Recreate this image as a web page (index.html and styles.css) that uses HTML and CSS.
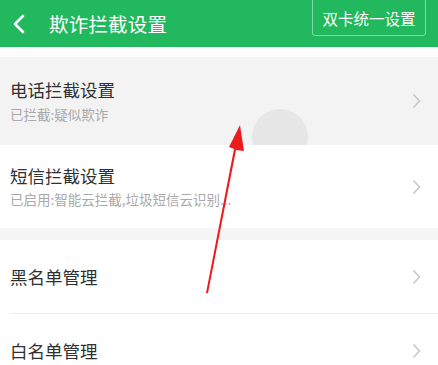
FILE: index.html
```html
<!DOCTYPE html>
<html lang="zh">
<head>
<meta charset="utf-8">
<link rel="stylesheet" href="styles.css">
</head>
<body>
<div class="page">
  <header class="topbar">
    <svg class="back" width="14" height="20" viewBox="0 0 14 20"><path d="M11 2 L3 10 L11 18" fill="none" stroke="#fff" stroke-width="2.6" stroke-linecap="round" stroke-linejoin="round"/></svg>
    <div class="title">欺诈拦截设置</div>
    <div class="dual">双卡统一设置</div>
  </header>
  <div class="gap"></div>
  <div class="item pressed two">
    <div class="texts">
      <div class="name">电话拦截设置</div>
      <div class="sub">已拦截:疑似欺诈</div>
    </div>
    <svg class="chev" width="9" height="16" viewBox="0 0 9 16"><path d="M1.5 1.5 L7.5 8 L1.5 14.5" fill="none" stroke="#c8c8c8" stroke-width="1.6"/></svg>
    <div class="ripple"></div>
  </div>
  <div class="item two sms">
    <div class="texts">
      <div class="name">短信拦截设置</div>
      <div class="sub">已启用:智能云拦截,垃圾短信云识别...</div>
    </div>
    <svg class="chev" width="9" height="16" viewBox="0 0 9 16"><path d="M1.5 1.5 L7.5 8 L1.5 14.5" fill="none" stroke="#c8c8c8" stroke-width="1.6"/></svg>
  </div>
  <div class="band"></div>
  <div class="item one divider">
    <div class="name">黑名单管理</div>
    <svg class="chev" width="9" height="16" viewBox="0 0 9 16"><path d="M1.5 1.5 L7.5 8 L1.5 14.5" fill="none" stroke="#c8c8c8" stroke-width="1.6"/></svg>
  </div>
  <div class="item one">
    <div class="name">白名单管理</div>
    <svg class="chev" width="9" height="16" viewBox="0 0 9 16"><path d="M1.5 1.5 L7.5 8 L1.5 14.5" fill="none" stroke="#c8c8c8" stroke-width="1.6"/></svg>
  </div>
  <svg class="arrow" width="438" height="365" viewBox="0 0 438 365">
    <polygon points="206,293 208,293 236,150 244,151 240,125 229,147 234,149" fill="#ec1c1c"/>
  </svg>
</div>
</body>
</html>
```

FILE: styles.css
```css
* { box-sizing: border-box; }
html, body { margin: 0; padding: 0; background: #fff; }
body {
  font-family: "Noto Sans CJK SC", "Noto Sans", sans-serif;
  width: 438px;
  height: 365px;
  overflow: hidden;
}
.page { position: relative; width: 438px; height: 365px; overflow: hidden; }

.topbar {
  height: 47px;
  background: #22b85d;
  display: flex;
  align-items: center;
  padding-left: 12px;
  color: #fff;
}
.back { display: block; margin-top: 0; }
.title {
  margin-left: 23px;
  font-size: 19.5px;
  line-height: 1;
  letter-spacing: 0.2px;
}
.dual {
  margin-left: auto;
  margin-right: 12px;
  align-self: flex-start;
  margin-top: -2px;
  width: 114px;
  height: 38px;
  border: 1px solid rgba(255,255,255,0.45);
  border-radius: 3px;
  display: flex;
  align-items: center;
  justify-content: center;
  padding-top: 2px;
  font-size: 15.5px;
}

.gap { height: 10px; background: #fcfcfc; }

.item {
  position: relative;
  display: flex;
  align-items: center;
  padding: 0 17px 0 10px;
  background: #fff;
  overflow: hidden;
}
.item.pressed { background: #f3f3f3; height: 88px; }
.item.sms { height: 83px; }
.item.one { height: 74px; }
.item.divider { border-bottom: 1px solid #ececec; margin-left: 10px; padding-left: 0; }
.texts { display: flex; flex-direction: column; }
.name {
  font-size: 17.5px;
  color: #303030;
  line-height: 1;
}
.two .name { margin-top: 0; }
.sub {
  margin-top: 9px;
  font-size: 13.5px;
  color: #a9a9a9;
  line-height: 1;
}
.chev { margin-left: auto; display: block; position: relative; z-index: 1; }
.ripple {
  position: absolute;
  left: 252px;
  top: 52px;
  width: 56px;
  height: 56px;
  border-radius: 50%;
  background: #e6e6e6;
}
.band { height: 12px; background: #f5f5f5; }

.arrow { position: absolute; left: 0; top: 0; pointer-events: none; }
```
